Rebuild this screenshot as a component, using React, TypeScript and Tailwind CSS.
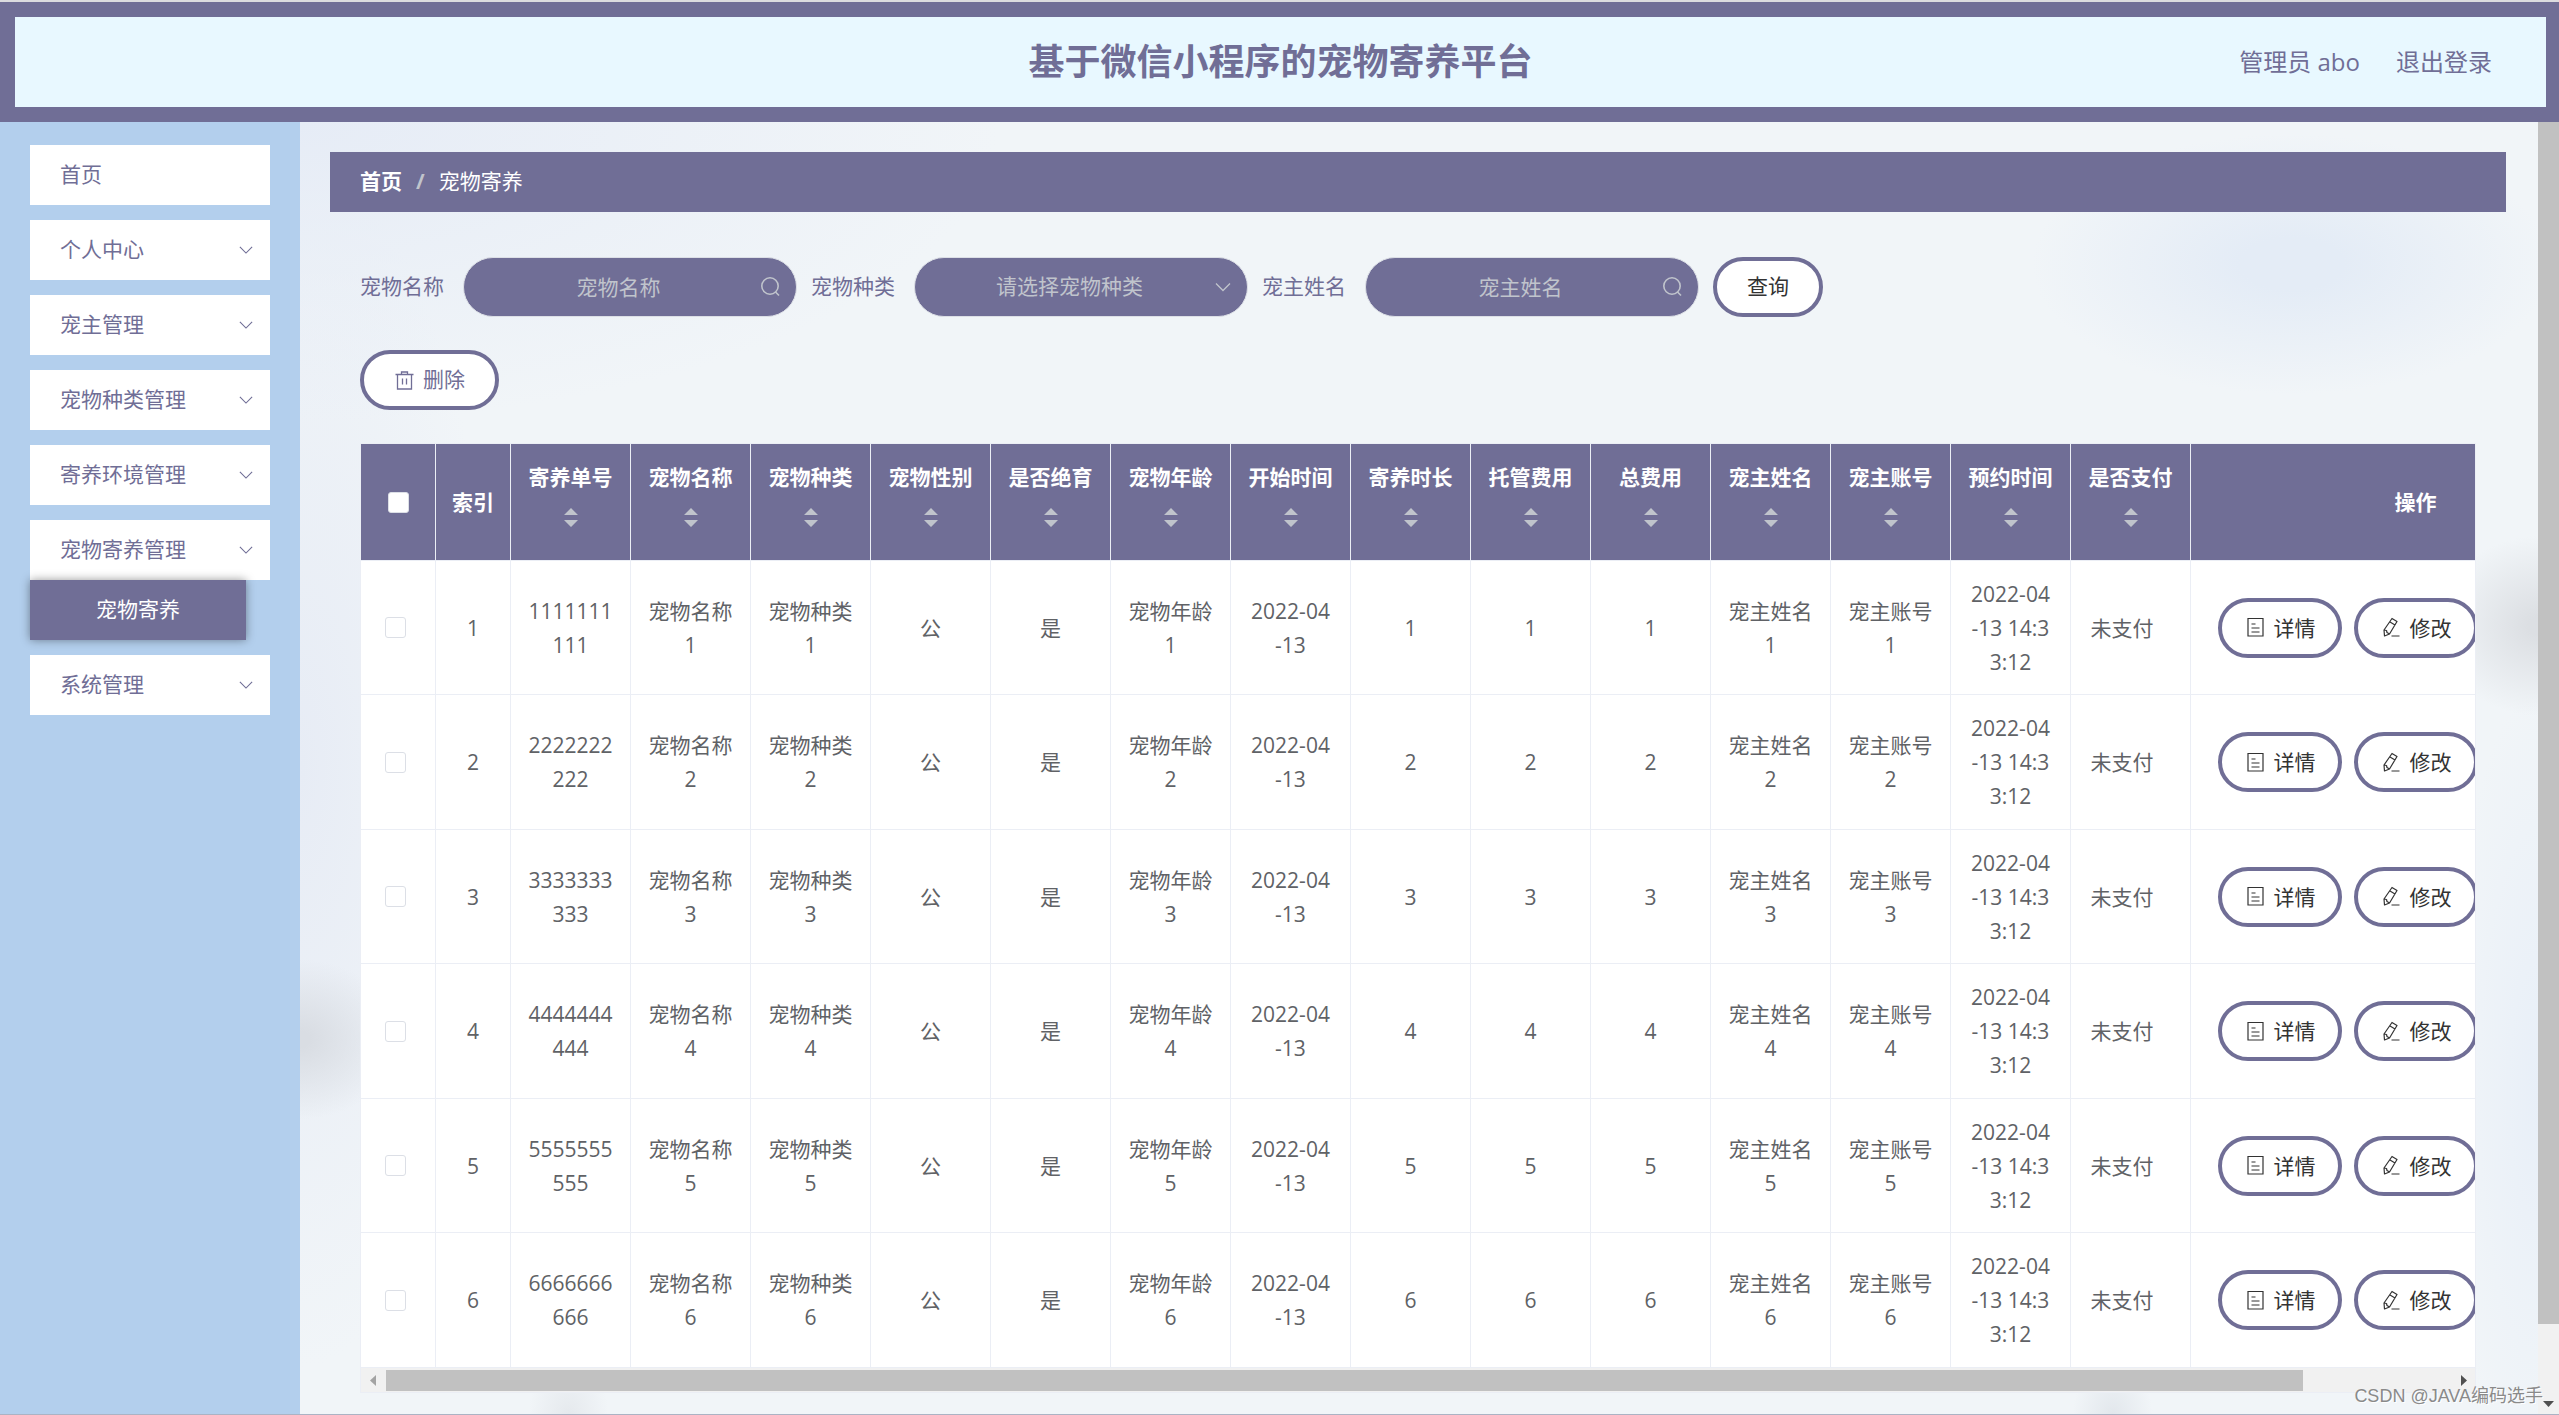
import { useState } from "react";

const menus = [
    { title: "首页" },
    { title: "个人中心", arrow: true },
    { title: "宠主管理", arrow: true },
    { title: "宠物种类管理", arrow: true },
    { title: "寄养环境管理", arrow: true },
    { title: "宠物寄养管理", arrow: true, child: "宠物寄养" },
    { title: "系统管理", arrow: true },
];

const columns = [
    "寄养单号", "宠物名称", "宠物种类", "宠物性别", "是否绝育", "宠物年龄", "开始时间",
    "寄养时长", "托管费用", "总费用", "宠主姓名", "宠主账号", "预约时间", "是否支付",
];

const rows = [1, 2, 3, 4, 5, 6].map((n) => ({
    id: n,
    cells: [
        String(n).repeat(10), `宠物名称${n}`, `宠物种类${n}`, "公", "是", `宠物年龄${n}`, "2022-04-13",
        `${n}`, `${n}`, `${n}`, `宠主姓名${n}`, `宠主账号${n}`, "2022-04-13 14:33:12",
    ],
}));

const ChevronIcon = ({ className }: { className: string }) => (
    <svg viewBox="0 0 16 16" className={className} fill="none" stroke="currentColor" strokeWidth="1.3">
        <path d="M1 4.5l7 7 7-7" />
    </svg>
);

const SearchIcon = () => (
    <svg viewBox="0 0 21 21" className="pointer-events-none absolute right-4 top-5 size-[21px] text-[#c0c4cc]" fill="none" stroke="currentColor" strokeWidth="1.6">
        <circle cx="10" cy="9" r="8.2" />
        <path d="M15.5 15l3.5 3.5" />
    </svg>
);

const TrashIcon = () => (
    <svg viewBox="0 0 21 21" className="size-[21px]" fill="none" stroke="currentColor" strokeWidth="1.3">
        <path d="M1.5 4.5h18M7.5 4.5V2h6v2.5M3.5 4.5V19h14V4.5M8.5 8.500v6M12.500 8.500v6" />
    </svg>
);

const DetailIcon = () => (
    <svg viewBox="0 0 21 21" className="size-[21px]" fill="none" stroke="currentColor" strokeWidth="1.2">
        <path d="M3 1.500h15v17.500H3zM6.500 7h4M6.500 11h8M6.500 15h8" />
    </svg>
);

const EditIcon = () => (
    <svg viewBox="0 0 21 21" className="size-[21px]" fill="none" stroke="currentColor" strokeWidth="1.2" strokeLinejoin="round">
        <path d="M11 1.500l5 3-7.500 12.500-5 2-.5-6zM9 5l5 3M3 13l2.500.5.5 2 2.500 1.500M10.500 19h8" />
    </svg>
);

const SortCaret = () => (
    <svg viewBox="0 0 14 19" className="mt-[14px] mb-[17px] h-[19px] w-[14px] fill-[#c0c4cc]">
        <path d="M0 7L7 0l7 7zM0 12l7 7 7-7z" />
    </svg>
);

const fieldClass =
    "h-[60px] w-[334px] appearance-none rounded-full border border-[#dcdfe6] bg-[#706e96] pl-[22px] pr-[45px] text-center text-[21px] text-[#c0c4cc] outline-none placeholder:text-[#c0c4cc]";

const boxClass = "block size-[21px] appearance-none rounded-[3px] border border-[#dcdfe6] bg-white";

const SearchField = ({ id, label }: { id: string, label: string }) => (
    <div className="flex items-center gap-[19px]">
        <label htmlFor={id}>{label}</label>
        <div className="relative">
            <input id={id} type="text" placeholder={label} className={fieldClass} />
            <SearchIcon />
        </div>
    </div>
);

const RowButton = ({ icon, children }: { icon: React.ReactNode, children: React.ReactNode }) => (
    <button type="button" className="flex h-[60px] w-[124px] shrink-0 items-center justify-center gap-2 rounded-full border-4 border-[#706e96] bg-white text-[21px] text-[#333333]">
        {icon}
        {children}
    </button>
);

const Header = () => (
    <header className="grid h-[120px] shrink-0 grid-cols-[1fr_auto_1fr] items-center border-[15px] border-r-[13px] border-[#706e96] bg-[#e8f8ff] text-[#706e96]">
        <h1 className="col-start-2 text-4xl font-bold">基于微信小程序的宠物寄养平台</h1>
        <div className="flex justify-end gap-9 pr-[54px] text-2xl">
            <span>管理员 abo</span>
            <a href="#logout">退出登录</a>
        </div>
    </header>
);

const Sidebar = () => (
    <nav className="w-[300px] shrink-0 bg-[#b3cfed] px-[30px] pt-[23px] text-[21px] text-[#706e96]">
        <ul className="flex flex-col gap-[15px]">
            {menus.map((m) => (
                <li key={m.title}>
                    <button type="button" className="flex h-[60px] w-full items-center justify-between bg-white pl-[30px] pr-[17px]">
                        {m.title}
                        {m.arrow && <ChevronIcon className="size-[14px]" />}
                    </button>
                    {m.child && (
                        <a href="#jiyang" className="relative flex h-[60px] w-[216px] items-center justify-center bg-[#706e96] text-white shadow-[0_0_9px_rgba(0,0,0,0.4)]">
                            {m.child}
                        </a>
                    )}
                </li>
            ))}
        </ul>
    </nav>
);

const DataTable = () => {
    const [selected, setSelected] = useState<number[]>([]);

    const toggle = (id: number) =>
        setSelected(selected.includes(id) ? selected.filter((s) => s !== id) : [...selected, id]);

    return (
        <div className="mt-[33px] overflow-hidden border border-[#ebeef5]">
            <table className="w-[2280px] table-fixed border-separate border-spacing-0 text-[21px] leading-[34px]">
                <colgroup>
                    <col className="w-[75px]" />
                    <col className="w-[75px]" />
                    {columns.map((c) => <col key={c} className="w-[120px]" />)}
                    <col className="w-[450px]" />
                </colgroup>
                <thead>
                    <tr className="h-[117px] bg-[#706e96] text-white [&>th]:border-b [&>th]:border-r [&>th]:border-[#ebeef5] [&>th]:p-0">
                        <th>
                            <input
                                type="checkbox"
                                aria-label="全选"
                                className={boxClass + " mx-auto checked:bg-[#b3cfed]"}
                                checked={selected.length === rows.length}
                                onChange={(e) => setSelected(e.target.checked ? rows.map((r) => r.id) : [])}
                            />
                        </th>
                        <th>索引</th>
                        {columns.map((c) => (
                            <th key={c}>
                                <div className="flex flex-col items-center">
                                    {c}
                                    <SortCaret />
                                </div>
                            </th>
                        ))}
                        <th>操作</th>
                    </tr>
                </thead>
                <tbody>
                    {rows.map((r) => (
                        <tr key={r.id} className="h-[134px] bg-white text-center text-[#606266] even:h-[135px] [&>td]:border-b [&>td]:border-r [&>td]:border-[#ebeef5] [&>td]:py-0">
                            <td className="pl-6">
                                <input
                                    type="checkbox"
                                    aria-label={`选择${r.id}`}
                                    className={boxClass + " checked:bg-[#706e96]"}
                                    checked={selected.includes(r.id)}
                                    onChange={() => toggle(r.id)}
                                />
                            </td>
                            <td>{r.id}</td>
                            {r.cells.map((c, i) => <td key={i} className="break-all px-[17px]">{c}</td>)}
                            <td className="pr-[17px]">未支付</td>
                            <td className="pl-[27px]">
                                <div className="flex gap-3">
                                    <RowButton icon={<DetailIcon />}>详情</RowButton>
                                    <RowButton icon={<EditIcon />}>修改</RowButton>
                                </div>
                            </td>
                        </tr>
                    ))}
                </tbody>
            </table>
            <div className="flex h-6 items-center bg-[#f1f1f1]">
                <svg viewBox="0 0 25 21" className="h-[21px] w-[25px] shrink-0 fill-[#a3a3a3]"><path d="M15 5v11l-6-5.500z" /></svg>
                <div className="h-[21px] grow-[13] bg-[#c1c1c1]" />
                <div className="grow" />
                <svg viewBox="0 0 25 21" className="h-[21px] w-[25px] shrink-0 fill-[#505050]"><path d="M11 5v11l6-5.500z" /></svg>
            </div>
        </div>
    );
};

export default function App() {
    return (
        <div className="relative flex min-h-screen flex-col border-b-2 border-t-2 border-b-[#abb3c4] border-t-[#dcdcdf] font-['Open_Sans','Noto_Sans_CJK_SC',sans-serif]">
            <Header />
            <div className="flex grow">
                <Sidebar />
                <main className="min-w-0 grow bg-[#f1f5f8] bg-[radial-gradient(ellipse_260px_130px_at_89%_11%,#e4ecf6_20%,transparent),radial-gradient(ellipse_100px_90px_at_100%_39%,#dcdfe3_10%,transparent),radial-gradient(ellipse_100px_80px_at_0%_71%,#d9dde3_10%,transparent),radial-gradient(ellipse_40px_50px_at_12%_100%,#e5e9ed,transparent),radial-gradient(ellipse_40px_50px_at_81%_100%,#e2e7ec,transparent),radial-gradient(ellipse_700px_300px_at_0%_0%,#e6ecf6,transparent),radial-gradient(ellipse_90px_400px_at_100%_75%,#e8eff8,transparent),radial-gradient(ellipse_200px_600px_at_0%_50%,#e7ecf5,transparent)] pb-[21px] pl-[30px] pr-8 pt-[30px] text-[21px] text-[#706e96]">
                    <div className="flex h-[60px] items-center gap-[14px] bg-[#706e96] px-[30px] text-white">
                        <a href="#home" className="font-bold">首页</a>
                        <span className="font-bold text-[#c0c4cc]">/</span>
                        <span>宠物寄养</span>
                    </div>
                    <div className="px-[30px] pt-[45px]">
                        <form className="flex gap-[14px]" onSubmit={(e) => e.preventDefault()}>
                            <SearchField id="petName" label="宠物名称" />
                            <div className="flex items-center gap-[19px]">
                                <label htmlFor="petType">宠物种类</label>
                                <div className="relative">
                                    <select id="petType" className={fieldClass + " [text-align-last:center]"}>
                                        <option>请选择宠物种类</option>
                                    </select>
                                    <ChevronIcon className="pointer-events-none absolute right-[17px] top-[22px] size-4 text-[#c0c4cc]" />
                                </div>
                            </div>
                            <SearchField id="ownerName" label="宠主姓名" />
                            <button type="submit" className="h-[60px] w-[110px] rounded-full border-4 border-[#706e96] bg-white text-[#333333]">查询</button>
                        </form>
                        <button type="button" className="mt-[33px] flex h-[60px] w-[139px] items-center justify-center gap-2 rounded-full border-4 border-[#706e96] bg-white">
                            <TrashIcon />
                            删除
                        </button>
                        <DataTable />
                    </div>
                </main>
                <div className="flex w-[21px] shrink-0 flex-col justify-between bg-[#f1f1f1]">
                    <div className="h-[93%] bg-[#c1c1c1]" />
                    <svg viewBox="0 0 21 21" className="size-[21px] fill-[#505050]"><path d="M5 8h11l-5.500 6z" /></svg>
                </div>
            </div>
            <div className="absolute bottom-1 right-4 font-['Liberation_Sans','Noto_Sans_CJK_SC',sans-serif] text-lg leading-7 text-[#8a8a8a] [text-shadow:1px_1px_0_#fff]">CSDN @JAVA编码选手</div>
        </div>
    );
}
